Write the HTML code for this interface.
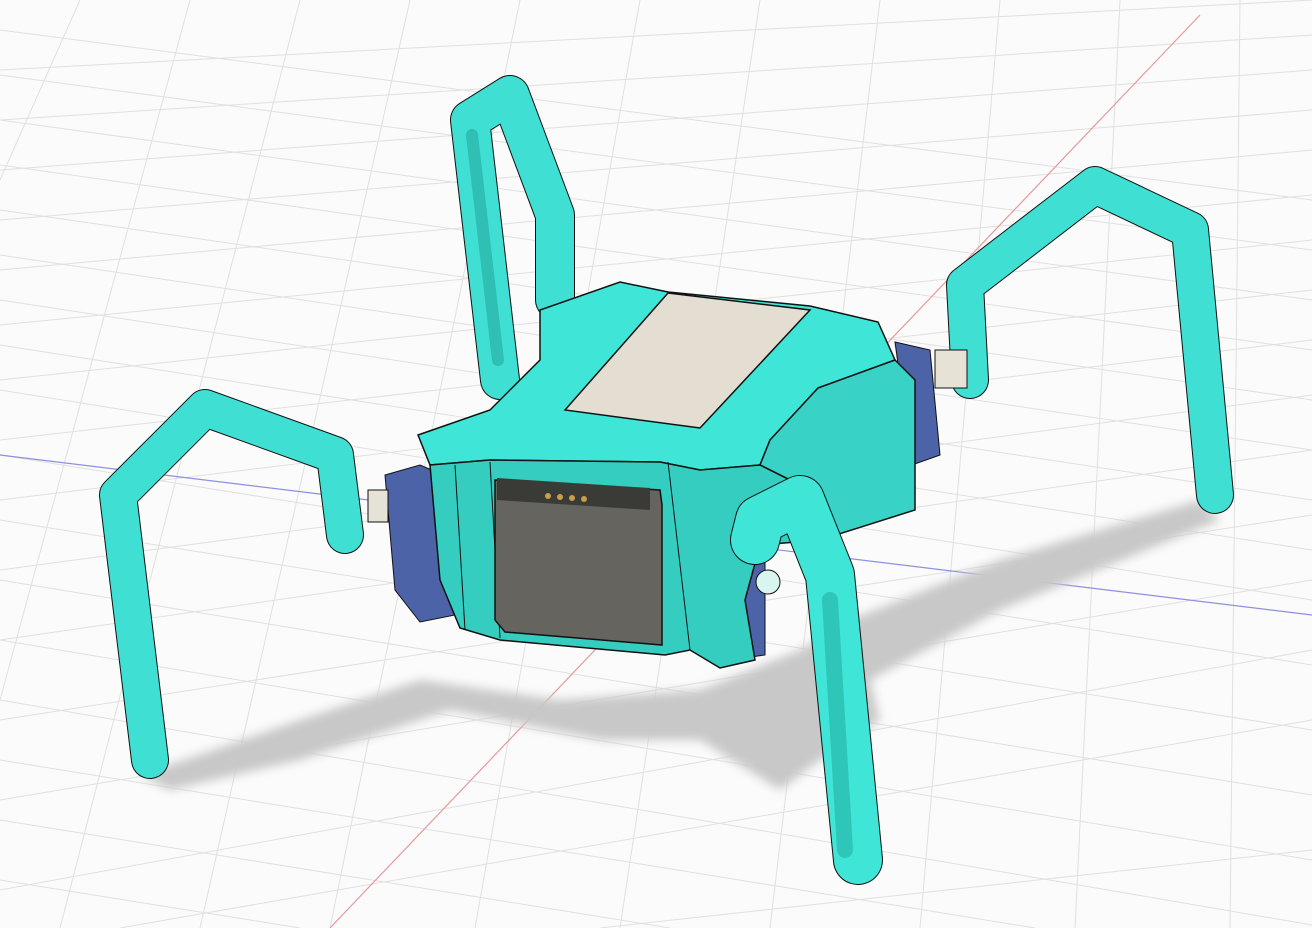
<!DOCTYPE html>
<html><head><meta charset="utf-8"><style>
html,body{margin:0;padding:0;background:#fff;width:1312px;height:928px;overflow:hidden;}
svg{display:block;}
</style></head><body>
<svg width="1312" height="928" viewBox="0 0 1312 928" xmlns="http://www.w3.org/2000/svg" overflow="hidden">
<defs>
<filter id="blur"><feGaussianBlur stdDeviation="5"/></filter>
<clipPath id="c"><rect width="1312" height="928"/></clipPath>
</defs>
<rect width="1312" height="928" fill="#fbfbfb"/>
<g clip-path="url(#c)">
<g stroke="#e0e0e0" stroke-width="1" fill="none">
<path d="M0,30 L1312,200 M0,75 L1312,250 M0,120 L1312,300 M0,165 L1312,350 M0,210 L1312,400 M0,255 L1312,450 M0,300 L1312,500 M0,345 L1312,550 M0,390 L1312,600 M0,455 L1312,665 M0,520 L1312,730 M0,580 L1312,795 M0,640 L1312,860 M0,700 L1312,925 M0,760 L1035,928 M0,820 L670,928 M0,880 L300,928"/>
<path d="M0,70 L1312,0 M0,120 L1312,35 M0,170 L1312,70 M0,220 L1312,110 M0,270 L1312,150 M0,325 L1312,195 M0,380 L1312,240 M0,440 L1312,290 M0,500 L1312,340 M0,570 L1312,395 M0,640 L1312,450 M0,720 L1312,515 M0,800 L1312,580 M0,890 L1312,650 M120,928 L1312,720 M600,928 L1312,850"/>
<path d="M80,0 L0,180 M190,0 L0,700 M300,0 L60,928 M410,0 L200,928 M520,0 L330,928 M640,0 L475,928 M760,0 L620,928 M880,0 L770,928 M1000,0 L920,928 M1120,0 L1075,928 M1240,0 L1230,928"/>
</g>
<path d="M1200,15 L330,928" stroke="#e69a9a" stroke-width="1.2"/>
<path d="M0,455 L1312,615" stroke="#8f8fe0" stroke-width="1.2"/>
<path d="M140,775 L300,720 L420,680 L560,700 L700,690 L800,650 L850,620 L1000,560 L1200,500 L1220,520 L1000,610 L870,680 L880,720 L820,760 L780,790 L700,740 L600,740 L450,710 L300,760 L170,790 Z" fill="#c8c8c8" filter="url(#blur)"/>
<g stroke-linejoin="round" stroke-linecap="round" fill="none">
<path d="M500,380 L470,120 L510,95 L555,215 L555,300" stroke="#111" stroke-width="40"/>
<path d="M500,380 L470,120 L510,95 L555,215 L555,300" stroke="#3fe0d3" stroke-width="38"/>
<path d="M498,360 L472,135" stroke="#2fbfb4" stroke-width="12"/>
<path d="M970,380 L965,285 L1095,185 L1190,230 L1215,495" stroke="#111" stroke-width="38"/>
<path d="M970,380 L965,285 L1095,185 L1190,230 L1215,495" stroke="#3fe0d3" stroke-width="36"/>
<path d="M345,535 L335,455 L205,408 L118,495 L150,760" stroke="#111" stroke-width="38"/>
<path d="M345,535 L335,455 L205,408 L118,495 L150,760" stroke="#3fe0d3" stroke-width="36"/>
</g>
<path d="M385,475 L420,465 L455,480 L455,615 L420,622 L395,590 Z" fill="#4d63a8" stroke="#111"/>
<rect x="368" y="490" width="20" height="32" fill="#e6e3d6" stroke="#111"/>
<path d="M895,342 L930,350 L940,455 L912,465 Z" fill="#4d63a8" stroke="#111"/>
<rect x="935" y="350" width="32" height="38" fill="#e6e3d6" stroke="#111"/>
<path d="M705,505 L745,500 L765,520 L765,655 L730,660 L710,640 Z" fill="#4d63a8" stroke="#111"/>
<path d="M418,435 L490,410 L540,360 L540,310 L620,282 L668,292 L810,306 L878,322 L895,360 L818,388 L770,440 L760,465 L700,470 L660,462 L490,460 L430,465 Z" fill="#3fe6d8" stroke="#111" stroke-width="1.5"/>
<path d="M818,388 L895,360 L915,380 L915,510 L820,540 L810,490 L760,465 L770,440 Z" fill="#38d2c6" stroke="#111" stroke-width="1.5"/>
<path d="M430,465 L490,460 L660,462 L700,470 L760,465 L810,490 L820,540 L760,545 L745,600 L755,660 L720,668 L690,650 L665,655 L500,640 L460,628 L440,580 Z" fill="#36cdc1" stroke="#111" stroke-width="1.5"/>
<path d="M455,465 L465,630 M490,462 L500,638 M668,462 L690,650" stroke="#111" fill="none"/>
<path d="M565,410 L668,293 L810,310 L700,428 Z" fill="#e3ddd2" stroke="#111" stroke-width="1.5"/>
<path d="M495,480 L660,490 L662,505 L662,645 L505,632 L495,620 Z" fill="#66645e" stroke="#111" stroke-width="1.5"/>
<path d="M497,478 L650,488 L650,510 L497,500 Z" fill="#3a3a36"/>
<g fill="#c9a04a"><circle cx="548" cy="496" r="3"/><circle cx="560" cy="497" r="3"/><circle cx="572" cy="498" r="3"/><circle cx="584" cy="499" r="3"/></g>
<g stroke-linejoin="round" stroke-linecap="round" fill="none">
<path d="M755,540 L760,520 L800,500 L830,575 L858,860" stroke="#111" stroke-width="50"/>
<path d="M755,540 L760,520 L800,500 L830,575 L858,860" stroke="#3fe6d8" stroke-width="48"/>
<path d="M830,600 L845,850" stroke="#2fc6ba" stroke-width="16"/>
</g>
<circle cx="768" cy="582" r="12" fill="#d9f5f0" stroke="#111"/>
</g>
</svg>
</body></html>
